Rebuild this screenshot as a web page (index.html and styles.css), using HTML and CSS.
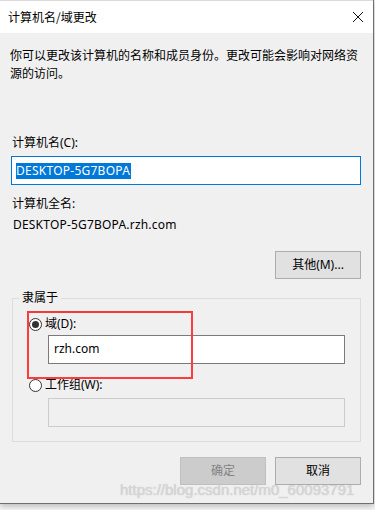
FILE: index.html
```html
<!DOCTYPE html>
<html lang="zh-CN">
<head>
<meta charset="utf-8">
<title>计算机名/域更改</title>
<link rel="stylesheet" href="styles.css">
</head>
<body>
<div class="dialog">
  <div class="titlebar">
    <span class="title">计算机名/域更改</span>
    <svg class="close" width="12" height="12" viewBox="0 0 12 12"><path d="M1 1L11 11M11 1L1 11" stroke="#111" stroke-width="1" fill="none"/></svg>
  </div>
  <div class="content">
    <p class="desc">你可以更改该计算机的名称和成员身份。更改可能会影响对网络资源的访问。</p>
    <div class="label label-c">计算机名(C):</div>
    <div class="input focused"><span class="sel">DESKTOP-5G7BOPA</span></div>
    <div class="label label-full">计算机全名:</div>
    <div class="label fullname">DESKTOP-5G7BOPA.rzh.com</div>
    <div class="row-right more-row"><div class="btn">其他(M)...</div></div>
    <div class="group">
      <div class="group-title">隶属于</div>
      <div class="radio-row first"><span class="radio checked"></span><span>域(D):</span></div>
      <div class="input sub">rzh.com</div>
      <div class="radio-row second"><span class="radio"></span><span>工作组(W):</span></div>
      <div class="input sub disabled"></div>
    </div>
    <div class="row-right actions">
      <div class="btn disabled">确定</div>
      <div class="btn">取消</div>
    </div>
  </div>
  <div class="redbox"></div>
  <div class="watermark">https://blog.csdn.net/m0_60093791</div>
</div>
</body>
</html>
```
FILE: styles.css
```css
html, body {
  margin: 0;
  padding: 0;
}
body {
  width: 375px;
  height: 510px;
  background: #f4f4f4;
  overflow: hidden;
  font-family: "Noto Sans", "Noto Sans CJK SC", sans-serif;
  font-size: 12px;
  color: #000;
}
.dialog {
  position: relative;
  width: 373px;
  height: 503px;
  background: #f0f0f0;
  border-right: 1px solid #6f6f6f;
  border-bottom: 1px solid #6f6f6f;
  box-shadow: 0 2px 6px rgba(0,0,0,0.25);
  display: flex;
  flex-direction: column;
}
.titlebar {
  height: 32px;
  border-top: 1px solid #dadada;
  background: #fff;
  display: flex;
  align-items: center;
  justify-content: space-between;
  padding: 0 9px 0 8px;
}
.title {
  font-family: "Noto Sans CJK SC", sans-serif;
  font-size: 12px;
  line-height: 18px;
  color: #000;
}
.close {
  display: block;
}
.content {
  padding-left: 11px;
  width: 350px;
  display: flex;
  flex-direction: column;
}
.desc {
  margin: 13px 0 0 -1px;
  width: 352px;
  line-height: 18px;
  font-family: "Noto Sans CJK SC", sans-serif;
}
.label {
  line-height: 18px;
  padding-left: 1px;
}
.label-c {
  margin-top: 52px;
}
.input {
  box-sizing: border-box;
  height: 29px;
  background: #fff;
  border: 1px solid #7a7a7a;
  display: flex;
  align-items: center;
  padding-left: 4px;
  line-height: 18px;
}
.input.focused {
  margin-top: 4px;
  border-color: #0078d7;
}
.sel {
  background: #0078d7;
  color: #fff;
  line-height: 16px;
  padding-right: 1px;
  letter-spacing: 0.25px;
}
.label-full {
  margin-top: 10px;
}
.fullname {
  margin-top: 3px;
  padding-left: 2px;
  letter-spacing: 0.2px;
}
.row-right {
  display: flex;
  justify-content: flex-end;
  gap: 9px;
}
.more-row {
  margin-top: 17px;
}
.btn {
  box-sizing: border-box;
  width: 86px;
  height: 28px;
  background: #e1e1e1;
  border: 1px solid #adadad;
  display: flex;
  align-items: center;
  justify-content: center;
  line-height: 18px;
}
.btn.disabled {
  background: #cccccc;
  border-color: #bfbfbf;
  color: #838383;
}
.group {
  margin-top: 19px;
  margin-left: 1px;
  border: 1px solid #dcdcdc;
  padding: 0 16px 14px 16px;
  display: flex;
  flex-direction: column;
}
.group-title {
  align-self: flex-start;
  margin: -10px 0 0 -10px;
  padding: 0 3px;
  background: #f0f0f0;
  line-height: 18px;
}
.radio-row {
  display: flex;
  align-items: center;
  gap: 3px;
  line-height: 18px;
}
.radio-row.first {
  margin-top: 8px;
}
.radio-row.second {
  margin-top: 12px;
}
.radio {
  box-sizing: border-box;
  width: 13px;
  height: 13px;
  border: 1px solid #333;
  border-radius: 50%;
  background: #fff;
  display: flex;
  align-items: center;
  justify-content: center;
}
.radio.checked::after {
  content: "";
  width: 7px;
  height: 7px;
  border-radius: 50%;
  background: #333;
}
.input.sub {
  margin-top: 2px;
  margin-left: 19px;
  width: 297px;
  padding-left: 5px;
  padding-bottom: 2px;
}
.input.sub.disabled {
  margin-top: 4px;
  background: #f0f0f0;
  border-color: #cccccc;
}
.actions {
  margin-top: 15px;
}
.redbox {
  position: absolute;
  left: 27px;
  top: 311px;
  width: 162px;
  height: 64px;
  border: 2px solid #ff3b3b;
  border-top-color: #f53a3a;
}
.watermark {
  position: absolute;
  left: 120px;
  top: 481px;
  font-family: "Liberation Sans", sans-serif;
  font-size: 15px;
  line-height: 18px;
  color: rgba(215,215,215,0.85);
  text-shadow: 0 0 1px rgba(150,150,150,0.5);
  white-space: nowrap;
}
```
